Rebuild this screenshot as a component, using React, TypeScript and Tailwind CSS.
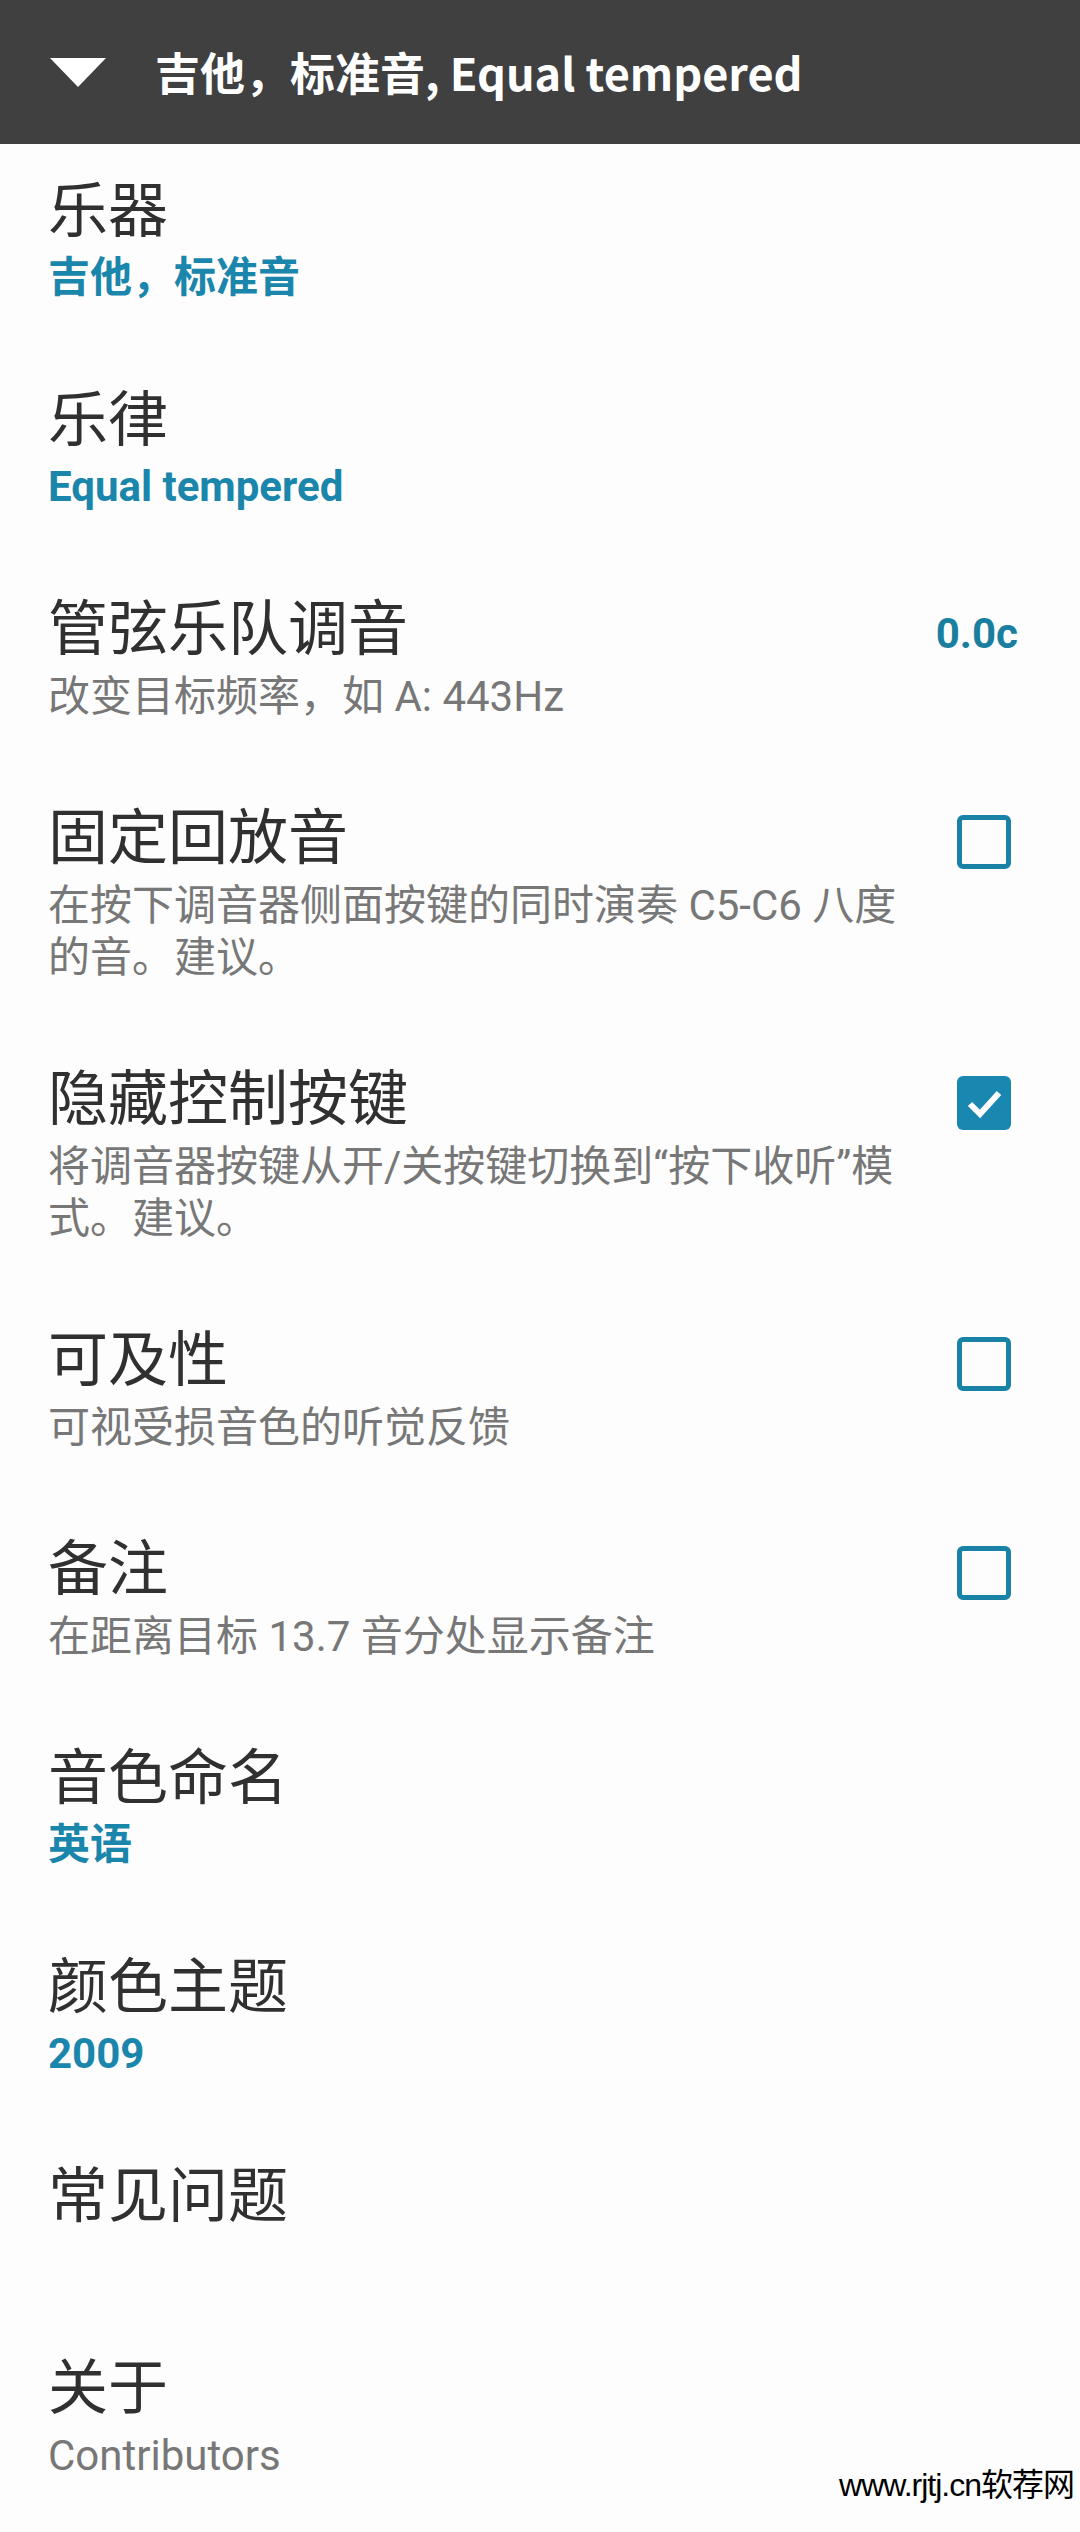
import React from "react";

type Pref = {
  title: string;
  summary?: string[];
  kind?: "grey" | "blue";
  widget?: "check" | "checked" | "value";
  value?: string;
};

const PREFS: Pref[] = [
  { title: "乐器", summary: ["吉他，标准音"], kind: "blue" },
  { title: "乐律", summary: ["Equal tempered"], kind: "blue" },
  {
    title: "管弦乐队调音",
    summary: ["改变目标频率，如 A: 443Hz"],
    kind: "grey",
    widget: "value",
    value: "0.0c",
  },
  {
    title: "固定回放音",
    summary: ["在按下调音器侧面按键的同时演奏 C5-C6 八度", "的音。建议。"],
    kind: "grey",
    widget: "check",
  },
  {
    title: "隐藏控制按键",
    summary: ["将调音器按键从开/关按键切换到“按下收听”模", "式。建议。"],
    kind: "grey",
    widget: "checked",
  },
  { title: "可及性", summary: ["可视受损音色的听觉反馈"], kind: "grey", widget: "check" },
  { title: "备注", summary: ["在距离目标 13.7 音分处显示备注"], kind: "grey", widget: "check" },
  { title: "音色命名", summary: ["英语"], kind: "blue" },
  { title: "颜色主题", summary: ["2009"], kind: "blue" },
  { title: "常见问题" },
  { title: "关于", summary: ["Contributors"], kind: "grey" },
];

const CJK = "font-['Noto_Sans_CJK_SC',sans-serif]";
const ROBOTO = "font-['Roboto','Noto_Sans_CJK_SC',sans-serif]";

function Widget({ p }: { p: Pref }) {
  if (p.widget === "value") {
    return (
      <div className={`${ROBOTO} mr-[-7px] mt-[24px] text-[42px] leading-[52px] font-bold text-[#1a7f9f]`}>
        {p.value}
      </div>
    );
  }
  if (p.widget === "check") {
    return <div className="mt-[22px] h-[54px] w-[54px] rounded-[6px] border-[5px] border-[#1a82a4]" />;
  }
  if (p.widget === "checked") {
    return (
      <div className="mt-[22px] flex h-[54px] w-[54px] items-center justify-center rounded-[6px] bg-[#1a87b0]">
        <svg width="54" height="54" viewBox="0 0 54 54">
          <path d="M13 28 L23 38 L42 17" fill="none" stroke="#fff" strokeWidth="6" />
        </svg>
      </div>
    );
  }
  return null;
}

function Row({ p, first }: { p: Pref; first: boolean }) {
  const pt = first ? "pt-[22px]" : "pt-[34px]";
  const noSummary = !p.summary;
  return (
    <div className={`flex items-start justify-between pl-[48px] pr-[69px] ${pt} ${noSummary ? "h-[192px]" : p.kind === "blue" ? "pb-[37px]" : "pb-[36px]"}`}>
      <div className="flex flex-col">
        <div className={`${CJK} text-[60px] leading-[80px] text-[#303030]`}>{p.title}</div>
        {p.summary && p.kind === "blue" && (
          <div className={`${ROBOTO} mt-[6px] text-[42px] leading-[52px] font-bold text-[#1a86ab]`}>
            {p.summary[0]}
          </div>
        )}
        {p.summary && p.kind === "grey" && (
          <div className={`${ROBOTO} mt-[7px] whitespace-nowrap text-[42px] leading-[52px] text-[#777777]`}>
            {p.summary.map((line, i) => (
              <div key={i}>{line}</div>
            ))}
          </div>
        )}
      </div>
      <Widget p={p} />
    </div>
  );
}

export default function App() {
  return (
    <div className="relative min-h-[2532px] w-[1080px] overflow-hidden bg-[#fdfdfd]">
      {/* toolbar */}
      <div className="flex h-[144px] items-center bg-[#404040] pl-[50px]">
        <svg width="56" height="30" viewBox="0 0 56 30" className="mt-[2px]">
          <polygon points="0,0 56,0 28,29" fill="#fff" />
        </svg>
        <div className={`${CJK} ml-[49px] text-[45px] font-bold text-white`}>
          吉他，标准音, Equal tempered
        </div>
      </div>

      <div className="flex flex-col">
        {PREFS.map((p, i) => (
          <Row key={p.title} p={p} first={i === 0} />
        ))}
      </div>

      {/* watermark */}
      <div className="absolute bottom-[28px] right-[6px] font-['Liberation_Sans','Noto_Sans_CJK_SC',sans-serif] text-[32px] leading-[38px] tracking-[-1px] text-black">
        www.rjtj.cn软荐网
      </div>
    </div>
  );
}
